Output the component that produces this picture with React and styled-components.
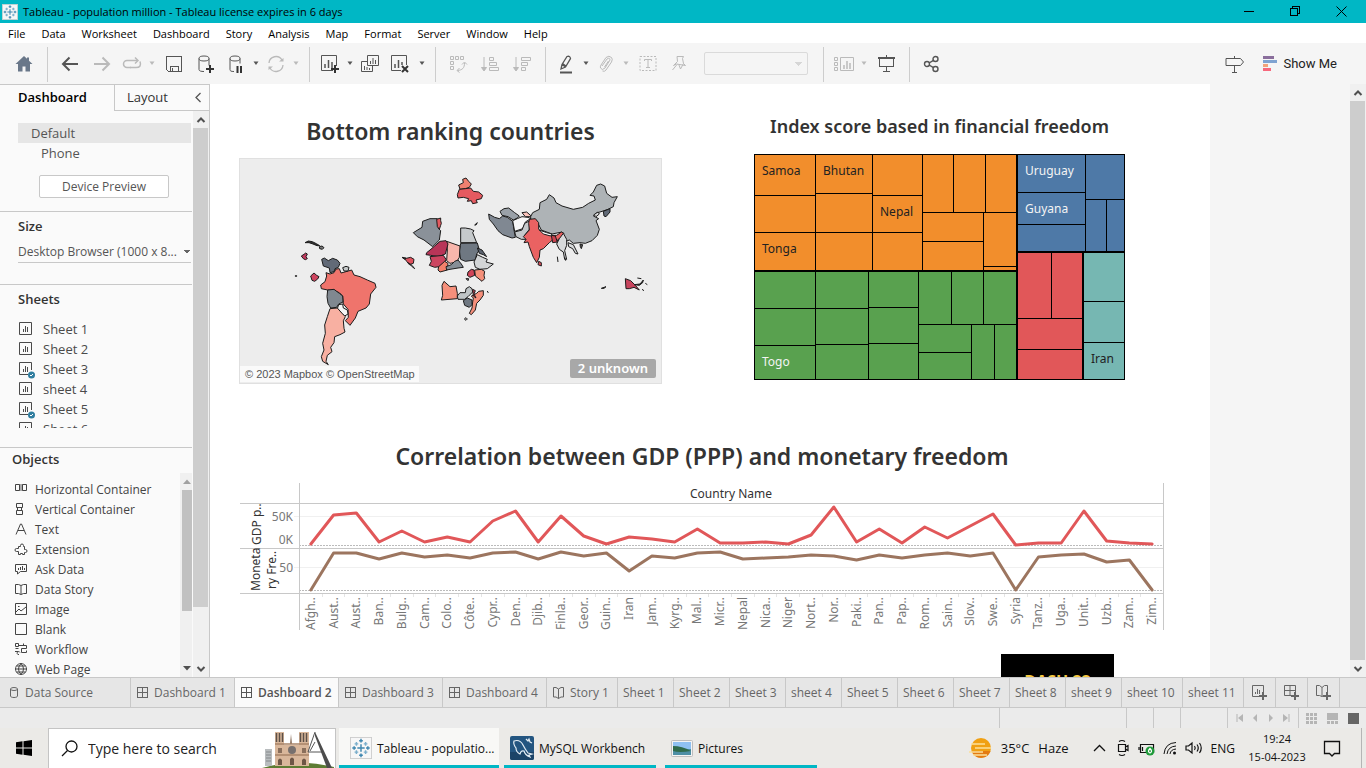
import React from "react";
import styled, { createGlobalStyle } from "styled-components";

const UI = `"Open Sans", "Noto Sans", sans-serif`;
const VIZ = `"Noto Sans", "Open Sans", sans-serif`;
const LINE = "#c8c8c8";

const GlobalStyle = createGlobalStyle`
  *, *::before, *::after { box-sizing: border-box; }
  body { margin: 0; font-family: ${UI}; font-size: 12px; color: #333; background: #fff; }
  button, input, select { font: inherit; color: inherit; margin: 0; }
  button { background: none; border: 0; padding: 0; cursor: pointer; }
  h2, h3, ul, p { margin: 0; padding: 0; }
  ul { list-style: none; }
  svg { display: block; flex: none; overflow: visible; }
`;

const Window = styled.div`
  display: flex;
  flex-direction: column;
  height: 100vh;
  overflow: hidden;
`;

/* ---------- title bar and menu ---------- */

const TitleBar = styled.header`
  display: flex;
  align-items: center;
  height: 23px;
  flex: none;
  padding: 0 2px;
  background: #00b7c5;
  color: #000;
  font-size: 11px;
`;

const TitleText = styled.span`
  flex: 1;
  padding-left: 5px;
`;

const WindowButton = styled.button`
  display: flex;
  align-items: center;
  justify-content: center;
  width: 46px;
  height: 20px;
`;

const MenuBar = styled.nav`
  display: flex;
  align-items: center;
  gap: 16px;
  height: 20px;
  flex: none;
  padding-left: 8px;
  background: #fff;
  color: #000;
  font-size: 11px;
`;

/* ---------- toolbar ---------- */

const ToolBar = styled.div`
  display: flex;
  align-items: stretch;
  height: 41px;
  flex: none;
  background: #f5f5f5;
  padding: 4px 0 2px 2px;
`;

const ToolGroup = styled.div`
  display: flex;
  align-items: center;
  padding: 0 7px 2px 6px;
  border-right: 1px solid ${(p) => (p.$last ? "transparent" : "#cdcdcd")};
`;

const ToolButton = styled.button`
  display: flex;
  align-items: center;
  justify-content: center;
  width: ${(p) => (p.$caret ? 12 : p.$narrow ? 28 : 32)}px;
  height: 28px;
  color: ${(p) => (p.$off ? "#bababa" : "#555")};
`;

const FitSelect = styled.select`
  appearance: none;
  width: 104px;
  height: 23px;
  margin: 0 8px 0 12px;
  border: 1px solid #cfcfcf;
  border-radius: 2px;
  background: linear-gradient(to bottom right, #c9c9c9 50%, transparent 50%) 94px 9px / 4px 4px no-repeat,
    linear-gradient(to bottom left, #c9c9c9 50%, transparent 50%) 90px 9px / 4px 4px no-repeat, #f5f5f5;
`;

const ToolEnd = styled.div`
  display: flex;
  align-items: center;
  gap: 12px;
  margin-left: auto;
  padding: 0 29px 2px 0;
`;

const ShowMe = styled.button`
  display: flex;
  align-items: center;
  gap: 5px;
  font-family: Roboto, sans-serif;
  font-size: 13px;
  color: #222;
`;

/* ---------- scroll bar ---------- */

const Rail = styled.div`
  display: flex;
  flex-direction: column;
  width: ${(p) => (p.$slim ? 12 : 16)}px;
  flex: none;
  background: #f0f0f0;
  padding: ${(p) => (p.$slim ? "0 0 0 2px" : "0 1px 0 0")};
`;

const RailArrow = styled.button`
  display: flex;
  align-items: center;
  justify-content: center;
  height: 17px;
  color: ${(p) => (p.$off ? "#a0a0a0" : "#505050")};
`;

const RailThumb = styled.div`
  flex: ${(p) => p.$size};
  background: ${(p) => (p.$dark ? "#c1c1c1" : "#cdcdcd")};
`;

const RailSpace = styled.div`
  flex: ${(p) => p.$size};
`;

/* ---------- side pane ---------- */

const Body = styled.div`
  display: flex;
  flex: 1;
  min-height: 0;
`;

const SidePane = styled.aside`
  display: flex;
  flex-direction: column;
  width: 210px;
  flex: none;
  border-top: 1px solid ${LINE};
  border-right: 1px solid ${LINE};
  background: #fafafa;
`;

const PaneTabs = styled.div`
  display: flex;
  height: 26px;
  flex: none;
`;

const PaneTab = styled.button`
  width: ${(p) => (p.$active ? 114 : 74)}px;
  padding: 0 0 2px ${(p) => (p.$active ? 18 : 12)}px;
  text-align: left;
  font-size: 13px;
  font-weight: ${(p) => (p.$active ? 600 : 400)};
  color: ${(p) => (p.$active ? "#000" : "#333")};
  border: 0 solid ${LINE};
  border-width: ${(p) => (p.$active ? "0" : "0 0 1px 1px")};
`;

const PaneCollapse = styled.button`
  flex: 1;
  display: flex;
  align-items: center;
  justify-content: center;
  border-bottom: 1px solid ${LINE};
  color: #555;
`;

const PaneBody = styled.div`
  display: flex;
  flex: 1;
  min-height: 0;
`;

const PaneContent = styled.div`
  display: flex;
  flex-direction: column;
  flex: 1;
  min-width: 0;
  padding-right: 1px;
`;

const Section = styled.section`
  padding: ${(p) => p.$pad || "5px 1px 0 18px"};
  height: ${(p) => p.$height}px;
  flex: none;
  border-bottom: 1px solid ${LINE};
`;

const SectionTitle = styled.h3`
  font-size: 13px;
  line-height: 18px;
  font-weight: 600;
  color: #333;
`;

const DeviceItem = styled.button`
  display: block;
  width: 100%;
  height: 20px;
  padding-left: ${(p) => (p.$nested ? 23 : 13)}px;
  text-align: left;
  font-size: 13px;
  line-height: 20px;
  color: #555;
  background: ${(p) => (p.$active ? "#e6e6e6" : "transparent")};
`;

const OutlineButton = styled.button`
  display: block;
  width: 130px;
  height: 23px;
  margin: 12px 0 0 21px;
  border: 1px solid ${LINE};
  border-radius: 2px;
  background: #fff;
  color: #555;
  font-size: 12px;
`;

const SizeSelect = styled.select`
  appearance: none;
  display: block;
  width: 100%;
  height: 23px;
  margin-top: 5px;
  border: 0;
  border-bottom: 1px solid ${LINE};
  font-size: 12px;
  color: #555;
  background: linear-gradient(to bottom right, #666 50%, transparent 50%) right 0 top 10px / 4px 4px no-repeat,
    linear-gradient(to bottom left, #666 50%, transparent 50%) right 4px top 10px / 4px 4px no-repeat;
`;

const SheetList = styled.ul`
  height: 109px;
  margin-top: 11px;
  overflow: hidden;
`;

const SheetItem = styled.button`
  display: flex;
  align-items: center;
  gap: 7px;
  height: 20px;
  font-size: 13px;
  color: #4a4a4a;
`;

const Objects = styled.section`
  display: flex;
  flex-direction: column;
  flex: 1;
  min-height: 0;
  padding: 2px 0 0 12px;
`;

const ObjectsBody = styled.div`
  display: flex;
  flex: 1;
  min-height: 0;
  margin-top: 5px;
`;

const ObjectList = styled.ul`
  flex: 1;
  padding-top: 6px;
  overflow: hidden;
`;

const ObjectItem = styled.button`
  display: flex;
  align-items: center;
  gap: 5px;
  height: 20px;
  padding-left: 2px;
  white-space: nowrap;
  font-size: 12px;
  color: #444;
`;

/* ---------- dashboard ---------- */

const Stage = styled.main`
  display: flex;
  flex: 1;
  min-width: 0;
  background: #f5f5f5;
`;

const StageView = styled.div`
  flex: 1;
  min-width: 0;
  overflow: hidden;
`;

const Canvas = styled.div`
  width: 1000px;
  min-height: 800px;
  padding: 30px 46px 0 29px;
  background: #fff;
`;

const TopRow = styled.div`
  display: flex;
  justify-content: space-between;
  padding-right: 39px;
`;

const Zone = styled.section`
  display: flex;
  flex-direction: column;
`;

const VizTitle = styled.h2`
  font-family: ${VIZ};
  font-weight: 600;
  font-size: ${(p) => (p.$small ? 18 : 23)}px;
  line-height: ${(p) => (p.$small ? 24 : 34)}px;
  margin-bottom: ${(p) => (p.$small ? 16 : 10)}px;
  text-align: center;
  color: #333;
`;

const MapFrame = styled.div`
  position: relative;
  width: 423px;
  height: 226px;
  border: 1px solid #e0e0e0;
  background: #ededed;
`;

const MapCredit = styled.span`
  position: absolute;
  left: 0;
  bottom: 1px;
  padding: 0 4px 0 5px;
  background: #fafafa;
  font: 11px/16px "Liberation Sans", Arial, sans-serif;
  color: #555;
`;

const MapBadge = styled.button`
  position: absolute;
  right: 5px;
  bottom: 5px;
  height: 19px;
  padding: 0 8px;
  border-radius: 2px;
  background: #a8a8a8;
  color: #fff;
  font-family: ${VIZ};
  font-size: 13px;
  font-weight: 600;
  line-height: 19px;
`;

const TrendZone = styled.section`
  margin-top: 55px;
  padding-left: 1px;
`;

const Brand = styled.div`
  width: 113px;
  height: 113px;
  margin: 23px 0 0 762px;
  padding-top: 16px;
  background: #000;
  color: #f5c842;
  font: 700 16px/22px ${UI};
  text-align: center;
`;

/* ---------- sheet tabs and status ---------- */

const SheetTabs = styled.nav`
  display: flex;
  height: 31px;
  flex: none;
  border: solid ${LINE};
  border-width: 1px 0;
  background: #e6e6e6;
`;

const TAB_WIDTH = { source: 131, board: 104, story: 71, sheet: 56, wide: 61, add: 32 };

const SheetTab = styled.button`
  display: flex;
  align-items: center;
  justify-content: ${(p) => (p.$kind === "add" ? "center" : "flex-start")};
  gap: 5px;
  width: ${(p) => TAB_WIDTH[p.$kind]}px;
  flex: none;
  padding-left: ${(p) => (p.$kind === "add" ? 0 : p.$kind === "source" ? 8 : 5)}px;
  border-right: 1px solid ${LINE};
  white-space: nowrap;
  font-size: 12px;
  font-weight: ${(p) => (p.$active ? 600 : 400)};
  background: ${(p) => (p.$active ? "#fafafa" : "transparent")};
  color: ${(p) => (p.$active ? "#555" : "#666")};
`;

const StatusBar = styled.div`
  display: flex;
  justify-content: flex-end;
  height: 20px;
  flex: none;
  background: #ebebeb;
  color: #b5b5b5;
`;

const StatusCell = styled.div`
  display: flex;
  align-items: center;
  justify-content: space-around;
  width: ${(p) => p.$w}px;
  border-left: 1px solid ${LINE};
  padding: 0 ${(p) => p.$pad || 0}px;
`;

/* ---------- task bar ---------- */

const TaskBar = styled.footer`
  display: flex;
  height: 40px;
  flex: none;
  background: #ebeae7;
  color: #111;
`;

const StartButton = styled.button`
  display: flex;
  align-items: center;
  justify-content: center;
  width: 48px;
`;

const SearchBox = styled.label`
  display: flex;
  align-items: center;
  gap: 8px;
  width: 288px;
  margin-right: 3px;
  padding-left: 12px;
  border: 1px solid #c4c4c4;
  border-bottom: 0;
  background: #fff;
`;

const SearchInput = styled.input`
  width: 168px;
  border: 0;
  outline: 0;
  background: none;
  font-size: 14px;
  &::placeholder { color: #222; opacity: 1; }
`;

const TaskButton = styled.button`
  display: flex;
  align-items: center;
  gap: 5px;
  width: ${(p) => (p.$active ? 160 : 152)}px;
  margin-right: ${(p) => (p.$active ? 5 : 9)}px;
  padding-left: ${(p) => (p.$active ? 11 : 6)}px;
  padding-top: 3px;
  border-bottom: 3px solid #00b7c5;
  background: ${(p) => (p.$active ? "#f8f8f6" : "transparent")};
  white-space: nowrap;
`;

const Tray = styled.div`
  display: flex;
  align-items: center;
  margin-left: auto;
  padding-right: 4px;
`;

const Weather = styled.button`
  display: flex;
  align-items: center;
  gap: 9px;
  margin-right: 24px;
  font-size: 13px;
`;

const TrayIcons = styled.div`
  display: flex;
  align-items: center;
  gap: 8px;
`;

const Clock = styled.time`
  width: 76px;
  margin-left: 4px;
  text-align: center;
  font-size: 11px;
  line-height: 18px;
`;

const TrayEnd = styled.div`
  display: flex;
  align-items: center;
  justify-content: center;
  width: 47px;
  height: 100%;
  padding-right: 12px;
  border-right: 1px solid #b5b5b5;
`;

/* ---------- icons ---------- */

function Svg({ w = 18, h = 18, sw = 1, crisp, children }) {
  return (
    <svg
      width={w}
      height={h}
      viewBox={`0 0 ${w} ${h}`}
      fill="none"
      stroke="currentColor"
      strokeWidth={sw}
      shapeRendering={crisp ? "crispEdges" : undefined}
      aria-hidden="true"
    >
      {children}
    </svg>
  );
}

const Caret = () => (
  <Svg w={8} h={5}>
    <path d="M1.5 0.5h5L4 4z" fill="currentColor" stroke="none" />
  </Svg>
);

const Plus = ({ x, y }) => (
  <path d={`M${x - 4} ${y}h8M${x} ${y - 4}v8`} stroke="#333" strokeWidth="2" />
);

const TableauLogo = ({ size }) => (
  <svg width={size} height={size} viewBox="0 0 24 24" aria-hidden="true">
    <rect x="0.5" y="0.5" width="23" height="23" fill="#f7f7f7" stroke="#ccc" />
    <g stroke="#3f87b0" strokeWidth="1.6">
      <path d="M12 8v8M8 12h8M12 2v4M10 4h4M12 18v4M10 20h4M2.5 12h4M4.5 10v4M17.500 12h4M19.500 10v4" />
      <path d="M7 5.500v4M5 7.500h4M17 5.500v4M15 7.500h4M7 14.500v4M5 16.500h4M17 14.500v4M15 16.500h4" stroke="#7aaecb" />
    </g>
  </svg>
);

const ICONS = {
  home: (
    <Svg>
      <path d="M9 1L0.500 9h2.500v7.500h4.500v-5h3v5H15V9h2.500L14 5.700V2.500h-2v1.300z" fill="#697789" stroke="none" />
    </Svg>
  ),
  back: (
    <Svg sw={2}>
      <path d="M17 9H2M8.500 2.500L2 9l6.500 6.500" />
    </Svg>
  ),
  forward: (
    <Svg sw={2}>
      <path d="M1 9h15M9.500 2.500L16 9l-6.500 6.500" />
    </Svg>
  ),
  redo: (
    <Svg sw={1.5}>
      <path d="M8 12.500H4a3.500 3.500 0 0 1 0-7h10" />
      <path d="M12 2.500l3 3-3 3M17 6.500q2 6-4 6H7" />
    </Svg>
  ),
  save: (
    <Svg crisp>
      <path d="M1.500 1.500h15v15h-13l-2-2zM5.500 16v-5h8v5M7.500 13v3" />
    </Svg>
  ),
  dbAdd: (
    <Svg w={20} h={20}>
      <ellipse cx="8" cy="4.500" rx="5" ry="2.500" />
      <path d="M3 4.500v11c0 1.500 2 2 5 2M13 4.500v7" />
      <Plus x={14} y={15} />
    </Svg>
  ),
  dbPause: (
    <Svg w={20} h={20}>
      <ellipse cx="9" cy="4.500" rx="5" ry="2.500" />
      <path d="M4 4.500v11c0 1.500 1 2 4 2M14 4.500v5" />
      <path d="M11.500 12v7M15 12v7" stroke="#333" strokeWidth="2" />
    </Svg>
  ),
  refresh: (
    <Svg sw={1.3}>
      <path d="M2 8a7 7 0 0 1 13-3M16 10a7 7 0 0 1-13 3" />
      <path d="M16.500 3v3.500H12zM1.500 15v-3.500H6z" fill="currentColor" stroke="none" />
    </Svg>
  ),
  sheetAdd: (
    <Svg w={20} h={20}>
      <path d="M13 16.500H1.500v-15h15V12" />
      <path d="M5 14v-4M8.500 14V6M12 14V8" strokeWidth="1.500" />
      <Plus x={15} y={15} />
    </Svg>
  ),
  duplicate: (
    <Svg>
      <path d="M6.500 0.500h11v10h-11zM6 6.500H0.500v10h11V11M9.500 9V6M12 9V3M14.500 9V5M3.500 15v-4M6 15v-3M8.500 15v-2" />
    </Svg>
  ),
  clear: (
    <Svg w={20} h={20}>
      <path d="M11 16.500H1.500v-15h15V11" />
      <path d="M5 14v-4M8.500 14V6M12 11V8" strokeWidth="1.500" />
      <path d="M12 12l6 6M18 12l-6 6" stroke="#333" strokeWidth="2" />
    </Svg>
  ),
  swap: (
    <Svg>
      <path d="M1.500 1.500h3v3h-3zM6.500 1.500h3v3h-3zM11.500 1.500h3v3h-3zM1.500 6.500h3v3h-3zM1.500 11.500h3v3h-3z" />
      <path d="M15.500 8c0 5-2 7-7 7.500M13 9.500L15.500 7 18 9.500M10.500 13L8 15.500l2.500 2" />
    </Svg>
  ),
  sortAsc: (
    <Svg>
      <path d="M3 2v13M0.500 12.500h5L3 16z" fill="currentColor" />
      <path d="M8.500 2.500h4v3h-4zM8.500 7.500h7v3h-7zM8.500 12.500h9v3h-9z" />
    </Svg>
  ),
  sortDesc: (
    <Svg>
      <path d="M3 2v13M0.500 12.500h5L3 16z" fill="currentColor" />
      <path d="M8.500 2.500h9v3h-9zM8.500 7.500h6v3h-6zM8.500 12.500h4v3h-4z" />
    </Svg>
  ),
  pen: (
    <Svg>
      <path d="M4 14l1-4.500L10 1.500q3-1 3.500 2L8.500 12zM5 9.500L8.500 12M5.500 8.500L9 11" strokeWidth="1.300" />
      <path d="M3 17.500h12" strokeWidth="2" />
    </Svg>
  ),
  clip: (
    <Svg>
      <path d="M5 11l5-7q3-2 3 1L8 13q-3 3-4.500 0Q3 12 4 10l5-7.500q3-2.500 5.500 0Q16 4 14.500 7L9 15q-1.500 2-3.500 1M7.500 12l4-6" />
    </Svg>
  ),
  text: (
    <Svg>
      <rect x="1" y="1.500" width="16" height="14" strokeDasharray="2 1.500" />
      <path d="M5.500 6V4.500h7V6M9 4.500v8M7 12.500h4" />
    </Svg>
  ),
  pin: (
    <Svg>
      <path d="M8 1.500h6.500l-1 2 1 5 2 2-9-1.500-3 1.500 4-4zM14.500 8.500l-3 5.500-1.500-4M8 9.500L3.500 15" />
    </Svg>
  ),
  cards: (
    <Svg w={20}>
      <path d="M0.500 2.500h3v3h-3zM0.500 7.500h3v3h-3zM0.500 12.500h3v3h-3zM6.500 2.500h13v13h-13z" />
      <path d="M10 14v-4M13 14V6M16 14V8" strokeWidth="1.500" />
    </Svg>
  ),
  present: (
    <Svg crisp>
      <path d="M1 2.500h17" strokeWidth="2" />
      <path d="M2.500 3v8.500h14V3M9.500 11v5M6 16.500h7M9.500 0v2" />
    </Svg>
  ),
  share: (
    <Svg sw={1.400}>
      <circle cx="4" cy="9" r="2.500" />
      <circle cx="12.500" cy="4" r="2.500" />
      <circle cx="12.500" cy="14" r="2.500" />
      <path d="M6 8l4.500-2.700M6 10l4.500 2.700" />
    </Svg>
  ),
  guide: (
    <Svg w={20}>
      <path d="M1 3.500h14.500L18.500 7l-3 3.500H1zM9.500 1v2M9.500 10.500v7M7 17.500h5" />
    </Svg>
  ),
};

const Tool = ({ icon, label, narrow, off }) => (
  <ToolButton $narrow={narrow} $off={off} aria-label={label}>
    {ICONS[icon]}
  </ToolButton>
);

const More = ({ off }) => (
  <ToolButton $caret $off={off} aria-label="More options">
    <Caret />
  </ToolButton>
);

const ChevronUp = () => (
  <Svg w={10} h={8} sw={2}>
    <path d="M1.500 6L5 2.500 8.500 6" />
  </Svg>
);
const ChevronDown = () => (
  <Svg w={10} h={8} sw={2}>
    <path d="M1.500 2L5 5.500 8.500 2" />
  </Svg>
);

const SheetIcon = ({ used }) => (
  <Svg w={18} h={16}>
    <path d={used ? "M10 13.500H1.500v-12h12V9" : "M1.500 1.500h12v12h-12z"} />
    <path d="M5.500 11V8M7.500 11V5M9.500 11V6" />
    {used && (
      <g>
        <circle cx="13.500" cy="14" r="3.500" fill="#2f7d9f" stroke="none" />
        <path d="M12 14l1 1 2-2" stroke="#fff" />
      </g>
    )}
  </Svg>
);

const GridIcon = () => (
  <Svg w={13} h={13} crisp>
    <path d="M1.500 1.500h10v10h-10zM6.500 1v11M1 6.500h11" />
  </Svg>
);
const BookIcon = () => (
  <Svg w={13} h={13}>
    <path d="M1.500 1.500h2.500l2.500 1.500 2.500-1.500h2.500v9.500h-2.500l-2.500 1.500-2.500-1.500h-2.500zM6.500 3v9.500" />
  </Svg>
);
const CylinderIcon = () => (
  <Svg w={12} h={13}>
    <ellipse cx="6" cy="3" rx="3.500" ry="1.500" />
    <path d="M2.500 3v7c0 2 7 2 7 0V3" />
  </Svg>
);

const OBJECTS = [
  ["Horizontal Container", "M1.500 2.500h4v6h-4zM8.500 2.500h4v6h-4z"],
  ["Vertical Container", "M2.500 1.500h6v4h-6zM2.500 8.500h6v4h-6zM3.500 5.500h4v3h-4z"],
  ["Text", "M2 12.500L6.500 2h1L12 12.500M4 8.500h6"],
  ["Extension", "M4.500 12.500v-3h-2a1.500 1.500 0 0 1 0-3h2v-2h2v-1a1.500 1.500 0 0 1 3 0v1h1v3h1a1.500 1.500 0 0 1 0 3h-1v2h-2v-1h-2v1z"],
  ["Ask Data", "M1.500 2.500h11v7h-6L3.500 12v-2.500h-2zM4.500 8V6M6.500 8V5M8.500 8V4M10.500 8V6"],
  ["Data Story", "M1.500 2.500h3L7 3.500l2.500-1h3v9h-3L7 12.500l-2.500-1h-3zM7 3.500v9"],
  ["Image", "M1.500 1.500h11v11h-11zM2 10l3-3 2 2 5-4M4 4.500h1.500"],
  ["Blank", "M1.500 1.500h11v11h-11z"],
  ["Workflow", "M1.500 1.500h3v3h-3zM1.500 6.500h3M4.500 3.500h8v3h-5v4h5v-2M9.500 1.500v2M5 12.500a1.500 1.500 0 1 1 1-2M1 9.500h3"],
  ["Web Page", "M7 1.500a5.500 5.500 0 1 0 .01 0M1.500 7h11M7 1.500q-5 5.500 0 11M7 1.500q5 5.500 0 11M2.500 4h9M2.500 10h9"],
];

/* ---------- map ---------- */

const AMERICAS = [
  ["#333", "M75 218l10-5 12 2 12 6 10 6-8 0-12-5-12-4z"],
  ["#777", "M118 230l8-2 6 5-5 5-8-2z"],
  ["#c23a5e", "M64 258l8-5 5-4 5 3-4 8 4 6-6 3-6-3z"],
  ["#555", "M46 317h4v2h-4z"],
  ["#cf4560", "M92 318l10-9 8 7 7 4-4 7-9 7-8-3z"],
  ["#ef746c", "M122 345l13-10 5-17-2-10 12 4 12-4 6-11 10-1 5 13 22-6 10-3 7 15 18 5 22 10 23 10 3 12-16 20-4 30-10 12-24 10-8 20-16 22-14-14 9-10-1-24-14-16-2-24-10-10-16-6-19-2-19-4z"],
  ["#626a77", "M125 268l8-4 12 8 13-7 14 5 8 10-5 12-10 4-3 9-12 3-2-14-18-6z"],
  ["#c5c9ca", "M188 293l10-4 9 3-3 11h-12z"],
  ["#808890", "M143 360l19-2 16 12 10 8 1 18-13 6-6 10-18 2-8-14-3-20z"],
  ["#f5f5f5", "M176 404l12-2 2 12 12 6 2 12-10 6-9-8-13-14z"],
  ["#f8b0a2", "M150 416l22-2 14 16 10 10-6 12 2 23 3 11-15 8-16 6-2 18-10 14 4 13-14 11-4 18 7 10-17-10-4-14 8-20-4-20 8-30-2-25 8-25z"],
];

const OLD_WORLD = [
  ["#f08070", "M176 45l14-7-2-10 10-4 8 10 8 8-6 10-12 4-16 2z"],
  ["#e55a60", "M172 74l6-16 18-2 16-2 8 10 16 2 12 10-4 10-16 4 4 8-14 3-4-9-12 2 4-8-16-4-16 2z"],
  ["#8a9199", "M40 188l26-16 2-18 22-8h22l4 30 6 6-4 28-20 20-26-20-20-10z"],
  ["#e55a60", "M110 148l12-4v8l2 8-2 6-4 12-6-8z"],
  ["#c5c9cb", "M182 174h14l16 3 10 5-4 6 12 30h-48z"],
  ["#333", "M224 165l8-7-4 7z"],
  ["#6f7882", "M182 220l50-1 6 21-8 12-4 18-16 2-14 2-14-6-4-26z"],
  ["#5c6470", "M232 234l14 6 14 20-10-6-12-4z"],
  ["#f8b6ac", "M140 214l40 14-2 34-8 14-20 4-10-8 2-32z"],
  ["#b83558", "M90 240l14-12 16-14 18-2 6 10-8 30-20 8-24-4-14-2 2-6z"],
  ["#cc4560", "M90 260l40-4 8 12-6 12-14 10-14 2-16-6 6-12z"],
  ["#f3806b", "M116 290l18-16 10 6-2 20-22 6-6-6z"],
  ["#868e96", "M138 290l16-6 10-10 10-4 10 12 6 10-16 2-24 4-10 2z"],
  ["#d3d5d6", "M222 276l10-22 16 8 14 6-4 8 22 6-18 14-22 2-14-6z"],
  ["#f5907a", "M224 300l20-2 10 6-2 12 2 10-8 8-20-16z"],
  ["#d04458", "M204 306l10-8 8 2 2 16-14 6-8-6z"],
  ["#999", "M198 326h8l-2 6z"],
  ["#444", "M6 262l12 2-4 4z"],
  ["#e0525e", "M14 266l18-4 10 6-2 12-12 4-8-10z"],
  ["#ddd", "M24 278l12 8 8 10-10-8z"],
  ["#f58f7b", "M126 346l6-12 18 16 18-2 4 22v16l-48 4 4-14z"],
  ["#bfc4c6", "M172 378l8-10h16l2-12 10-6 8 6 2 10-14 14-10 8h-20z"],
  ["#6f7882", "M190 392l12-8 14 6v14l-8 8-14-6z"],
  ["#f58f7b", "M220 384l-6-6 16-8 6-6 14-2v14l-10 14-10 10-4 20-12 14-6-4 8-16 2-18z"],
  ["#d04458", "M218 358l8 4-4 10 6 12-8-6z"],
  ["#ddd", "M193 447l5-4 4 4-4 4z"],
  ["#555", "M261 364l4 3z"],
  ["#9aa1a8", "M300 124l12-8 14-2 18 14 14 10-6 6-12 6-16-10-18-4z"],
  ["#808892", "M266 132l18 10 14 4 10-8 14 4 16 12 4 26 4 22-10 2-28-10-14-12-14-20-12-14z"],
  ["#f7f7f7", "M338 152l14-6 14-6 18 2 8 4-16 10-8 20-24 8z"],
  ["#c5c9cb", "M344 186l22-6 8-20 16-8-2 26-14 18 4 12h-14l-16-8z"],
  ["#fbc4bb", "M366 128l14-2 16 14h-20z"],
  ["#aeb3b6", "M392 140l6-12 20-10 2-20 20-10 8-14 14 10 6 14 18 10 34 10 28-6 18-12 20-10-4-12-12-2 10-10 10-20 12-4 12 6 6 22 16 12 16-2-10 18-2 12-16 8-24 8-10 2-10 10 16 8-8 6 4 10 6 16-6 18-16 16-20 8-16-2-20 2-12-10-10 4-8-18-4-10-30 6-32-12-10-20-6-10-16-2z"],
  ["#ea6262", "M388 148l18-2 10 12v20l20 14 18 4h16l14-10 8 4-10 16-8 2-4 8-12-6-10 8-18 18-10 4-2 22-8 16-10-16-12-32-4-14-12 2 6-10-8-8 18-20-2-20z"],
  ["#c94350", "M454 196l12 2 6 18-14 2z"],
  ["#fff", "M418 180l22 8 16 4-4 6-22-6z"],
  ["#e0525e", "M416 274l8 4v10l-10-4z"],
  ["#626b78", "M610 124l20-8v10l-12 14-6-2z"],
  ["#ddd", "M582 134l12-8 4 6-10 8z"],
  ["#d8dadb", "M478 206l12-16 10 18v18l-6 16 6 26h-6l-4-22-12-8-8-16z"],
  ["#d8dadb", "M504 218l16 6 8 16 6 12-8-2-8-14-12-6z"],
  ["#555", "M540 222l8 2-4 12-3-6zM472 260l2 16M494 262l3 10M604 355l14-5-6 5z"],
  ["#c8455e", "M676 326l16 6 14 14 12 14-16-8-14 4h-10z"],
  ["#333", "M702 344l18-2 10-12-2 8-10 8zM712 324l12 2M736 340l6 4M726 358l6 4"],
];

const Land = ({ shapes }) =>
  shapes.map(([fill, d], i) => <path key={i} d={d} fill={fill} />);

const WorldMap = () => (
  <svg width="100%" height="100%" viewBox="-120 -33 1263 672" role="img" aria-label="World map">
    <g stroke="#1c1c1c" strokeWidth="3" strokeLinejoin="round">
      <Land shapes={AMERICAS} />
      <g transform="translate(360 0)">
        <Land shapes={OLD_WORLD} />
      </g>
    </g>
  </svg>
);

/* ---------- treemap ---------- */

const TREE = [
  {
    fill: "#f28e2c",
    ink: "#222",
    cells: [
      [0, 0, 61, 41, "Samoa"], [0, 41, 61, 37], [0, 78, 61, 39, "Tonga"],
      [61, 0, 57, 39, "Bhutan"], [61, 39, 57, 39], [61, 78, 57, 39],
      [118, 0, 50, 41], [118, 41, 50, 37, "Nepal"], [118, 78, 50, 39],
      [168, 0, 31, 58], [199, 0, 32, 58], [231, 0, 32, 58],
      [168, 58, 61, 29], [168, 87, 61, 30], [229, 58, 34, 54], [229, 112, 34, 5],
    ],
  },
  {
    fill: "#59a14f",
    ink: "#f4f4f4",
    cells: [
      [0, 117, 61, 37], [0, 154, 61, 37], [0, 191, 61, 34, "Togo"],
      [61, 117, 53, 37], [61, 154, 53, 36], [61, 190, 53, 35],
      [114, 117, 50, 36], [114, 153, 50, 36], [114, 189, 50, 36],
      [164, 117, 33, 53], [197, 117, 32, 53], [229, 117, 34, 53],
      [164, 170, 53, 28], [164, 198, 53, 27], [217, 170, 23, 55], [240, 170, 23, 55],
    ],
  },
  {
    fill: "#4e79a7",
    ink: "#f4f4f4",
    cells: [
      [263, 0, 68, 38, "Uruguay"], [263, 38, 68, 32, "Guyana"], [263, 70, 68, 28],
      [331, 0, 39, 45], [331, 45, 21, 53], [352, 45, 18, 53],
    ],
  },
  {
    fill: "#e15759",
    ink: "#fff",
    cells: [[263, 98, 34, 66], [297, 98, 32, 66], [263, 164, 66, 31], [263, 195, 66, 30]],
  },
  {
    fill: "#76b7b2",
    ink: "#222",
    cells: [[329, 98, 41, 49], [329, 147, 41, 41], [329, 188, 41, 37, "Iran"]],
  },
];

const TreeSvg = styled.svg`
  font-family: ${VIZ};
  font-size: 12px;
`;

const TreeMap = () => (
  <TreeSvg width="371" height="226" viewBox="-0.5 -0.5 371 226" role="img" aria-label="Treemap">
    {TREE.map((g) =>
      g.cells.map(([x, y, w, h, label], i) => (
        <g key={i}>
          <rect x={x} y={y} width={w} height={h} fill={g.fill} stroke="#000" />
          {label && (
            <text x={x + 7.5} y={y + 20} fill={g.ink}>
              {label}
            </text>
          )}
        </g>
      ))
    )}
    <path d="M262.500 0v225M0 116.500h263M263 97.500h107M328.500 98v127" stroke="#000" strokeWidth="2" />
  </TreeSvg>
);

/* ---------- line chart ---------- */

const TREND = [
  ["Afgh..", 61, 107], ["Aust..", 32, 70], ["Aust..", 30, 70], ["Ban..", 59, 76],
  ["Bulg..", 48, 70], ["Cam..", 59, 74], ["Colo..", 54, 72], ["Côte..", 59, 75],
  ["Cypr..", 38, 70], ["Den..", 28, 69], ["Djib..", 59, 76], ["Finla..", 33, 69],
  ["Geor..", 53, 73], ["Guin..", 61, 70], ["Iran", 54, 88], ["Jam..", 56, 73],
  ["Kyrg..", 59, 75], ["Mal..", 46, 70], ["Micr..", 60, 69], ["Nepal", 60, 76],
  ["Nica..", 59, 75], ["Niger", 61, 74], ["Nort..", 52, 72], ["Nor..", 24, 73],
  ["Paki..", 59, 77], ["Pan..", 46, 72], ["Pap..", 60, 75], ["Rom..", 44, 72],
  ["Sain..", 55, 70], ["Slov..", 43, 73], ["Swe..", 31, 70], ["Syria", 62, 107],
  ["Tanz..", 60, 74], ["Uga..", 60, 72], ["Unit..", 28, 71], ["Uzb..", 58, 79],
  ["Zam..", 60, 77], ["Zim..", 61, 107],
];

const STEP = 864 / TREND.length;
const midX = (i) => 59.5 + STEP * (i + 0.5);
const linePoints = (col) => TREND.map((row, i) => `${midX(i)},${row[col]}`).join(" ");

const TrendSvg = styled.svg`
  width: 924px;
  height: 148px;
  font-family: ${VIZ};
  font-size: 12px;
`;

const TrendChart = () => (
  <TrendSvg viewBox="0 0 924 148" role="img" aria-label="GDP and monetary freedom by country">
    <g stroke="#f0f0f0">
      <path d="M54 33.500h870M54 84.500h870" />
      {TREND.map((_, i) => (
        <path key={i} d={`M${Math.round(59 + STEP * (i + 1)) + 0.5} 111v3`} stroke="#e4e4e4" />
      ))}
    </g>
    <path d="M59 62.500h864M59 107.500h864" stroke="#bbb" strokeDasharray="2 1" />
    <g stroke="#c8c8c8">
      <path d="M0 20.500h924M0 65.500h924M0 110.500h924M59.500 0v147M923.500 0v147" />
    </g>
    <polyline points={linePoints(1)} fill="none" stroke="#e15759" strokeWidth="3" strokeLinejoin="round" strokeLinecap="round" />
    <polyline points={linePoints(2)} fill="none" stroke="#9c755f" strokeWidth="3" strokeLinejoin="round" strokeLinecap="round" />
    <text x="491" y="15" fill="#333" textAnchor="middle">Country Name</text>
    <g fill="#777" textAnchor="end">
      <text x="53" y="38">50K</text>
      <text x="53" y="61">0K</text>
      <text x="53" y="89">50</text>
    </g>
    <g fill="#333">
      <text transform="translate(21 62) rotate(-90)">GDP p..</text>
      <text transform="translate(20 108) rotate(-90)">Moneta</text>
      <text transform="translate(36 106) rotate(-90)">ry Fre..</text>
    </g>
    <g fill="#777" textAnchor="end">
      {TREND.map(([name], i) => (
        <text key={i} transform={`translate(${Math.round(midX(i)) + 4} 114) rotate(-90)`}>
          {name}
        </text>
      ))}
    </g>
  </TrendSvg>
);

/* ---------- task bar pictures ---------- */

const CityArt = () => (
  <svg width="72" height="38" viewBox="0 0 72 38" aria-hidden="true">
    <path d="M0 38q34-10 72-1v1z" fill="#5d7c33" />
    <path d="M3 19h7v17H3z" fill="#b9bdbf" />
    <path d="M4 22h5M4 25h5M4 28h5M4 31h5" stroke="#85898b" />
    <path d="M13 2h9v13h15V2h10v34H13z" fill="#d9b79b" />
    <path d="M29 4l1 10h-2z" fill="#8a6f5c" />
    <path d="M14.500 3v9M17.500 3v9M20.500 3v9M38.500 3v9M41.500 3v9M44.500 3v9" stroke="#5c5048" strokeWidth="1.500" />
    <path d="M13 14h34M13 25h34" stroke="#a88468" strokeWidth="1.500" />
    <circle cx="30" cy="20" r="4" fill="#77706e" />
    <path d="M16 18h4v5h-4zM40 18h4v5h-4z" fill="#8a6f5c" />
    <path d="M16 35v-5q2-3 4 0v5zM28 35v-6q2-3 4 0v6zM40 35v-5q2-3 4 0v5z" fill="#6e5646" />
    <path d="M53 2l-7 20h14M53 12l-5 9" fill="none" stroke="#555" />
    <path d="M53 2v4l12 32h5z" fill="#4c4c4c" />
  </svg>
);

const DolphinIcon = () => (
  <svg width="24" height="24" viewBox="0 0 24 24" aria-hidden="true">
    <rect width="24" height="24" rx="2" fill="#235580" />
    <path d="M0 16h24v6a2 2 0 0 1-2 2H2a2 2 0 0 1-2-2z" fill="#1b4468" />
    <path d="M4 5q6-2 9 4 2 4 5 8l4 1-3 1 1 2q-5-2-6-6-3-1-4 3-4-2-4-6-3-4-2-7zM16 3l2 2 1-2 1 3 2 1" fill="none" stroke="#e4eef5" strokeWidth="1.200" />
  </svg>
);

const PicturesIcon = () => (
  <svg width="22" height="17" viewBox="0 0 22 17" aria-hidden="true">
    <rect x="0.500" y="0.500" width="21" height="16" rx="1" fill="#f4f4f4" stroke="#bdbdbd" />
    <path d="M2 2h18v7H2z" fill="#8fc1f2" />
    <path d="M2 9h18v6H2z" fill="#4d8fa5" />
    <path d="M2 6q9 0 18 5-12 2-18 0z" fill="#2f6b4c" />
  </svg>
);

const WeatherIcon = () => (
  <svg width="23" height="22" viewBox="0 0 23 22" aria-hidden="true">
    <circle cx="12" cy="11" r="10" fill="#f0a012" />
    <path d="M2.500 14h19A10 10 0 0 1 3 15z" fill="#e37a12" />
    <path d="M2 7h14M6 11h16M0 15h14M4 18h14" stroke="#fbe09a" strokeWidth="1.500" />
  </svg>
);

const STATIC_SHEETS = ["Sheet 1", "Sheet 2", "Sheet 3", "sheet 4", "Sheet 5", "Sheet 6"];

const TABS = [
  ["source", "Data Source", CylinderIcon],
  ["board", "Dashboard 1", GridIcon],
  ["board", "Dashboard 2", GridIcon],
  ["board", "Dashboard 3", GridIcon],
  ["board", "Dashboard 4", GridIcon],
  ["story", "Story 1", BookIcon],
  ["sheet", "Sheet 1"],
  ["sheet", "Sheet 2"],
  ["sheet", "Sheet 3"],
  ["sheet", "sheet 4"],
  ["sheet", "Sheet 5"],
  ["sheet", "Sheet 6"],
  ["sheet", "Sheet 7"],
  ["sheet", "Sheet 8"],
  ["sheet", "sheet 9"],
  ["wide", "sheet 10"],
  ["wide", "sheet 11"],
];

const ADD_TABS = [
  ["New worksheet", "M9 12.500H1.500v-11h11V8M4.500 10V8M6.500 10V5M8.500 10V6"],
  ["New dashboard", "M9 11.500H1.500v-10h11V8M7 1.500v10M1.500 6.500h11"],
  ["New story", "M9 11.500L7 12.500l-2.500-1h-3v-10h3L7 3.500l2.500-2h3V8M7 3.500v9"],
];

export default function App() {
  return (
    <Window>
      <GlobalStyle />
      <TitleBar>
        <TableauLogo size={16} />
        <TitleText>Tableau - population million - Tableau license expires in 6 days</TitleText>
        <WindowButton aria-label="Minimize">
          <Svg w={11} h={11} crisp><path d="M0 5.500h10" /></Svg>
        </WindowButton>
        <WindowButton aria-label="Restore">
          <Svg w={11} h={11} crisp><path d="M0.500 2.500h7v7h-7zM2.500 2V0.500h7v7H8" /></Svg>
        </WindowButton>
        <WindowButton aria-label="Close">
          <Svg w={11} h={11}><path d="M0.500 0.500l10 10M10.500 0.500l-10 10" /></Svg>
        </WindowButton>
      </TitleBar>

      <MenuBar>
        {["File", "Data", "Worksheet", "Dashboard", "Story", "Analysis", "Map", "Format", "Server", "Window", "Help"].map((m) => (
          <button key={m}>{m}</button>
        ))}
      </MenuBar>

      <ToolBar>
        <ToolGroup>
          <Tool icon="home" label="Start page" />
        </ToolGroup>
        <ToolGroup>
          <Tool icon="back" label="Undo" />
          <Tool icon="forward" label="Redo" off />
          <Tool icon="redo" label="Replay" narrow off />
          <More off />
          <Tool icon="save" label="Save" />
          <Tool icon="dbAdd" label="New data source" />
          <Tool icon="dbPause" label="Pause auto updates" narrow />
          <More />
          <Tool icon="refresh" label="Run update" narrow off />
          <More off />
        </ToolGroup>
        <ToolGroup>
          <Tool icon="sheetAdd" label="New worksheet" narrow />
          <More />
          <Tool icon="duplicate" label="Duplicate" narrow />
          <Tool icon="clear" label="Clear" />
          <More />
        </ToolGroup>
        <ToolGroup>
          <Tool icon="swap" label="Swap rows and columns" off />
          <Tool icon="sortAsc" label="Sort ascending" off />
          <Tool icon="sortDesc" label="Sort descending" off />
        </ToolGroup>
        <ToolGroup>
          <Tool icon="pen" label="Highlight" narrow />
          <More />
          <Tool icon="clip" label="Group members" narrow off />
          <More off />
          <Tool icon="text" label="Show mark labels" off />
          <Tool icon="pin" label="Fix axes" narrow off />
          <FitSelect aria-label="Fit" disabled />
        </ToolGroup>
        <ToolGroup>
          <Tool icon="cards" label="Show cards" narrow off />
          <More off />
          <Tool icon="present" label="Presentation mode" />
        </ToolGroup>
        <ToolGroup $last>
          <Tool icon="share" label="Share" />
        </ToolGroup>
        <ToolEnd>
          <Tool icon="guide" label="Data guide" />
          <ShowMe>
            <svg width="15" height="15" viewBox="0 0 15 15" aria-hidden="true">
              <path d="M0 0h11v3H0z" fill="#8a6e9c" />
              <path d="M0 4h14v3H0z" fill="#7fa3d1" />
              <path d="M0 8h5v3H0z" fill="#f2a37a" />
              <path d="M0 12h8v3H0z" fill="#f7687c" />
            </svg>
            Show Me
          </ShowMe>
        </ToolEnd>
      </ToolBar>

      <Body>
        <SidePane>
          <PaneTabs>
            <PaneTab $active>Dashboard</PaneTab>
            <PaneTab>Layout</PaneTab>
            <PaneCollapse aria-label="Collapse pane">
              <Svg w={7} h={11} sw={1.300}><path d="M5.500 1L1 5.500 5.500 10" /></Svg>
            </PaneCollapse>
          </PaneTabs>
          <PaneBody>
            <PaneContent>
              <Section $height={101} $pad="12px 1px 0 18px">
                <DeviceItem $active>Default</DeviceItem>
                <DeviceItem $nested>Phone</DeviceItem>
                <OutlineButton>Device Preview</OutlineButton>
              </Section>
              <Section $height={73}>
                <SectionTitle as="label" htmlFor="board-size">Size</SectionTitle>
                <SizeSelect id="board-size">
                  <option>Desktop Browser (1000 x 8...</option>
                </SizeSelect>
              </Section>
              <Section $height={163}>
                <SectionTitle>Sheets</SectionTitle>
                <SheetList>
                  {STATIC_SHEETS.map((s, i) => (
                    <li key={s}>
                      <SheetItem>
                        <SheetIcon used={i === 2 || i === 4} />
                        {s}
                      </SheetItem>
                    </li>
                  ))}
                </SheetList>
              </Section>
              <Objects>
                <SectionTitle>Objects</SectionTitle>
                <ObjectsBody>
                  <ObjectList>
                    {OBJECTS.map(([name, d], i) => (
                      <li key={name}>
                        <ObjectItem>
                          <Svg w={16} h={14}>
                            {i === 0 && <path d="M5.500 2.500h3v6h-3z" fill="#aaa" stroke="#aaa" />}
                            <path d={d} />
                          </Svg>
                          {name}
                        </ObjectItem>
                      </li>
                    ))}
                  </ObjectList>
                  <Rail $slim>
                    <RailArrow $off aria-label="Scroll up">
                      <Svg w={8} h={5}><path d="M0 5L4 0.500 8 5z" fill="currentColor" stroke="none" /></Svg>
                    </RailArrow>
                    <RailThumb $size={5} $dark />
                    <RailSpace $size={2} />
                    <RailArrow aria-label="Scroll down">
                      <Svg w={8} h={5}><path d="M0 0h8L4 4.500z" fill="currentColor" stroke="none" /></Svg>
                    </RailArrow>
                  </Rail>
                </ObjectsBody>
              </Objects>
            </PaneContent>
            <Rail>
              <RailArrow aria-label="Scroll up"><ChevronUp /></RailArrow>
              <RailThumb $size={9} />
              <RailSpace $size={1} />
              <RailArrow aria-label="Scroll down"><ChevronDown /></RailArrow>
            </Rail>
          </PaneBody>
        </SidePane>

        <Stage>
          <StageView>
            <Canvas>
              <TopRow>
                <Zone>
                  <VizTitle>Bottom ranking countries</VizTitle>
                  <MapFrame>
                    <WorldMap />
                    <MapCredit>© 2023 Mapbox © OpenStreetMap</MapCredit>
                    <MapBadge>2 unknown</MapBadge>
                  </MapFrame>
                </Zone>
                <Zone>
                  <VizTitle $small>Index score based in financial freedom</VizTitle>
                  <TreeMap />
                </Zone>
              </TopRow>
              <TrendZone>
                <VizTitle>Correlation between GDP (PPP) and monetary freedom</VizTitle>
                <TrendChart />
              </TrendZone>
              <Brand>DASH 22</Brand>
            </Canvas>
          </StageView>
          <Rail>
            <RailArrow aria-label="Scroll up"><ChevronUp /></RailArrow>
            <RailThumb $size={1} />
            <RailArrow aria-label="Scroll down"><ChevronDown /></RailArrow>
          </Rail>
        </Stage>
      </Body>

      <SheetTabs>
        {TABS.map(([kind, name, Icon]) => (
          <SheetTab key={name} $kind={kind} $active={name === "Dashboard 2"}>
            {Icon && <Icon />}
            {name}
          </SheetTab>
        ))}
        {ADD_TABS.map(([name, d]) => (
          <SheetTab key={name} $kind="add" aria-label={name}>
            <Svg w={17} h={17}>
              <path d={d} />
              <path d="M12 8v8M8 12h8" strokeWidth="2" />
            </Svg>
          </SheetTab>
        ))}
      </SheetTabs>

      <StatusBar>
        <StatusCell $w={127} />
        <StatusCell $w={27} />
        <StatusCell $w={27} />
        <StatusCell $w={47} />
        <StatusCell $w={71} $pad={4}>
          <Svg w={8} h={8}><path d="M1 0v8" /><path d="M7 0v8L2 4z" fill="currentColor" stroke="none" /></Svg>
          <Svg w={8} h={8}><path d="M6 0v8L2 4z" fill="currentColor" stroke="none" /></Svg>
          <Svg w={8} h={8}><path d="M2 0v8l4-4z" fill="currentColor" stroke="none" /></Svg>
          <Svg w={8} h={8}><path d="M7 0v8" /><path d="M1 0v8l5-4z" fill="currentColor" stroke="none" /></Svg>
        </StatusCell>
        <StatusCell $w={68} $pad={2}>
          <Svg w={11} h={11} sw={3}><path d="M0 1.500h11M0 5.500h11M0 9.500h11" strokeDasharray="3 1" /></Svg>
          <Svg w={11} h={11}><path d="M0 0h11v7H0zM0 8h3v3H0zM4 8h3v3H4zM8 8h3v3H8z" fill="currentColor" stroke="none" /></Svg>
          <Svg w={11} h={11}><path d="M0 0h11v11H0z" fill="#666" stroke="none" /></Svg>
        </StatusCell>
      </StatusBar>

      <TaskBar>
        <StartButton aria-label="Start">
          <svg width="16" height="16" viewBox="0 0 16 16" aria-hidden="true">
            <path d="M0 2.200L6.500 1.300V7.500H0zM7.500 1.200L16 0v7.500H7.500zM0 8.500h6.500v6.200L0 13.800zM7.500 8.500H16V16l-8.500-1.200z" fill="#000" />
          </svg>
        </StartButton>
        <SearchBox>
          <Svg w={17} h={17} sw={1.300}>
            <circle cx="10.500" cy="6.500" r="5.500" />
            <path d="M6.500 10.500L1 16" />
          </Svg>
          <SearchInput placeholder="Type here to search" aria-label="Search" />
          <CityArt />
        </SearchBox>
        <TaskButton $active>
          <TableauLogo size={22} />
          Tableau - populatio...
        </TaskButton>
        <TaskButton>
          <DolphinIcon />
          MySQL Workbench
        </TaskButton>
        <TaskButton>
          <PicturesIcon />
          Pictures
        </TaskButton>
        <Tray>
          <Weather>
            <WeatherIcon />
            <span>35°C</span>
            <span>Haze</span>
          </Weather>
          <TrayIcons>
            <Svg w={13} h={8} sw={1.300}><path d="M1 7l5.500-5.500L12 7" /></Svg>
            <Svg w={16} h={18} sw={1.200}>
              <path d="M4.500 5.500h7v7h-7zM11.500 8l2.500-1.500v5L11.500 10M5 2.500q3-2 6 0M5 15.500q3 2 6 0" />
            </Svg>
            <Svg w={17} h={16} sw={1.200}>
              <path d="M2.500 4.500h13v8h-13zM1 7v3M4.500 7v4" />
              <circle cx="12" cy="11" r="4.500" fill="#1f9a3a" stroke="none" />
              <path d="M12 8.500q-3 3 0 4.500 3-1.500 0-4.500z" stroke="#fff" />
            </Svg>
            <Svg w={14} h={14}>
              <path d="M1 13Q2 2 13 1.500M4 13q1-7.500 9-8M7 13q.5-4.500 6-5" />
              <circle cx="11.500" cy="12" r="1.500" fill="currentColor" stroke="none" />
            </Svg>
            <Svg w={18} h={14} sw={1.200}>
              <path d="M1 5v4h2.500L7 12V2L3.500 5zM9.500 5q1.500 2 0 4M12 3.500q2.500 3.500 0 7M14.500 2q3.500 5 0 10" />
            </Svg>
            <span>ENG</span>
          </TrayIcons>
          <Clock>
            19:24
            <br />
            15-04-2023
          </Clock>
          <TrayEnd>
            <Svg w={18} h={17} sw={1.300}>
              <path d="M1.500 1.500h15v12h-5l-2.500 2.500-2.500-2.500h-5z" />
            </Svg>
          </TrayEnd>
        </Tray>
      </TaskBar>
    </Window>
  );
}
